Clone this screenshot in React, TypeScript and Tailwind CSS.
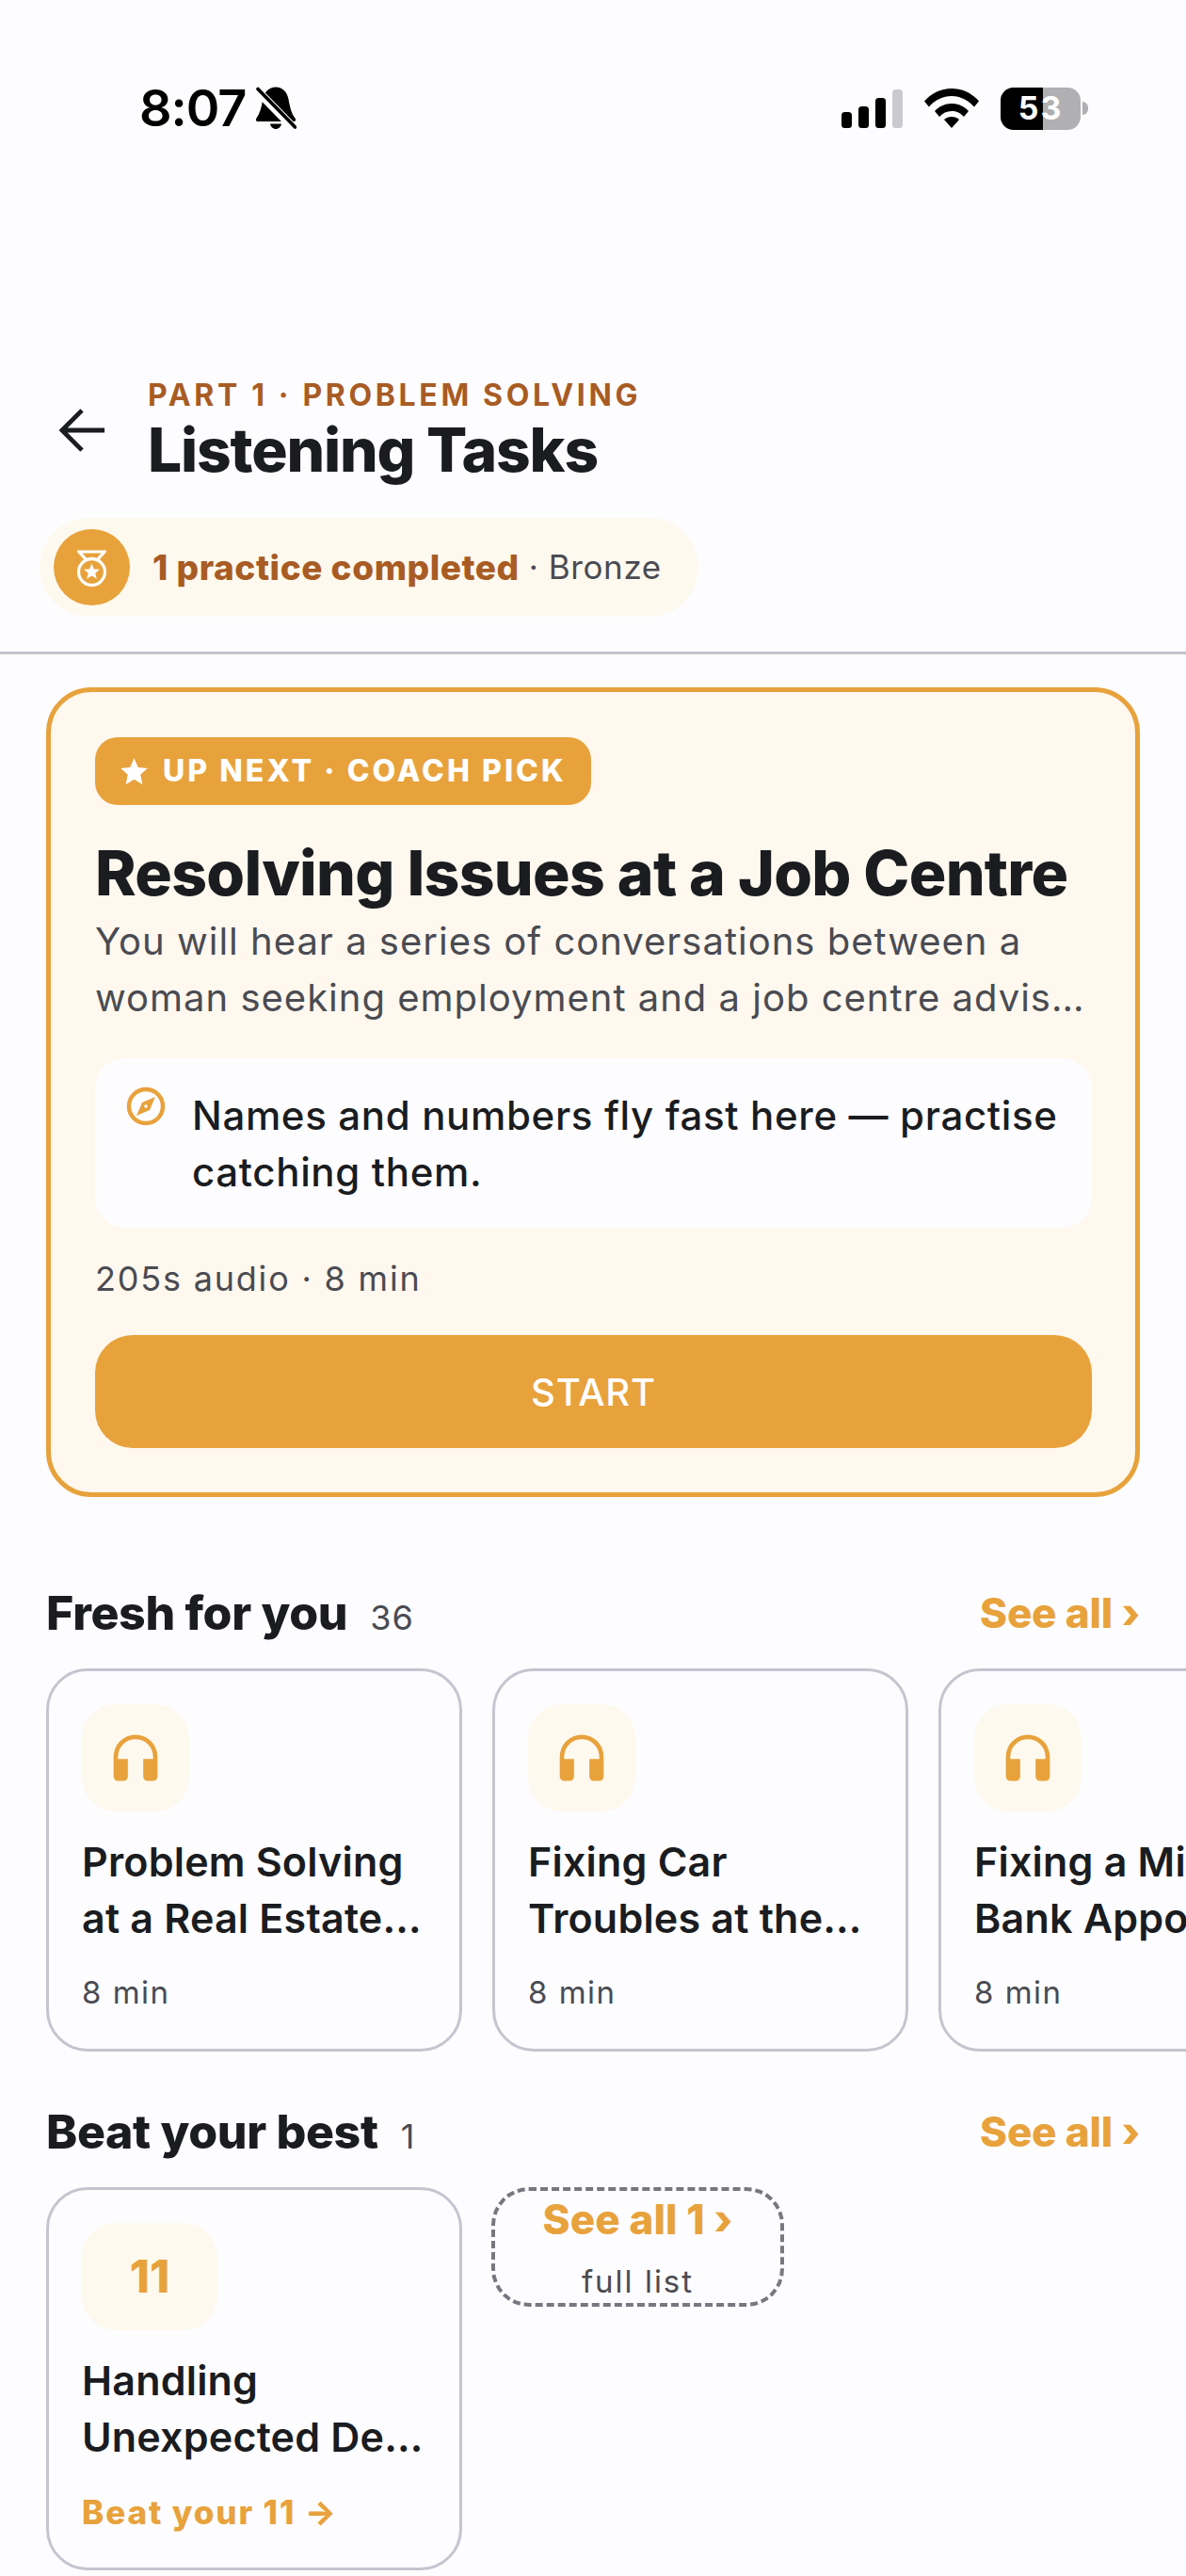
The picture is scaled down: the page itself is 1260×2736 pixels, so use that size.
import React from "react";

const amber = "#e8a23c";

function Bell() {
  return (
    <svg width="43" height="46" viewBox="0 0 43 46" className="ml-[11px]">
      <path d="M21 .5c7.500 0 12 5.500 13.500 13 1.500 8 3 15 7 20 1.200 1.500.7 3.500-1.500 3.500H2c-2 0-2.700-2-1.500-3.500 3.500-5 5.500-12 6.500-19C8 6 14 .5 21 .5z" fill="#000" />
      <path d="M15 39.500h12c-.5 3-3 5.500-6 5.500s-5.500-2.500-6-5.500z" fill="#000" />
      <path d="M1 4l40 41" stroke="#fdfcff" strokeWidth="9" />
      <path d="M2 2.500l39.500 40.500" stroke="#000" strokeWidth="3.600" strokeLinecap="round" />
    </svg>
  );
}

function Signal() {
  return (
    <svg width="65" height="41" viewBox="0 0 65 41">
      <rect x="0" y="24" width="11" height="17" rx="3.500" fill="#000" />
      <rect x="18" y="18" width="11" height="23" rx="3.500" fill="#000" />
      <rect x="36" y="9" width="11" height="32" rx="3.500" fill="#000" />
      <rect x="54" y="0" width="11" height="41" rx="3.500" fill="#c9c9cf" />
    </svg>
  );
}

function Wifi() {
  return (
    <svg width="58" height="42" viewBox="0 0 58 42">
      <path d="M0 13.500C7.500 5 18 0 29 0s21.500 5 29 13.500l-5 6C46.500 12 38 8 29 8S11.500 12 5 19.500z" fill="#000" />
      <path d="M11 24c4.500-5 11-8 18-8s13.500 3 18 8l-5 6c-3.500-4-8-6-13-6s-9.500 2-13 6z" fill="#000" />
      <path d="M21 33c2-2 5-3 8-3s6 1 8 3l-8 9z" fill="#000" />
    </svg>
  );
}

function Battery() {
  return (
    <div className="flex items-center">
      <div className="relative w-[85px] h-[45px] rounded-[14px] overflow-hidden flex bg-[#b0b0b2]">
        <div className="w-[45px] h-full bg-black" />
        <div className="absolute inset-0 flex items-center justify-center text-white text-[34px] font-bold leading-none tracking-[2px]">
          53
        </div>
      </div>
      <div className="w-[6px] h-[14px] rounded-r-[7px] bg-[#b0b0b2] ml-[2px]" />
    </div>
  );
}

function Medal() {
  return (
    <svg width="31" height="40" viewBox="0 0 31 40" fill="none" className="mt-[2px]">
      <path d="M2 2h27l-8 9H10z" stroke="#fff" strokeWidth="3.200" strokeLinejoin="miter" />
      <circle cx="15.500" cy="23.500" r="14" stroke="#fff" strokeWidth="3.300" fill="#e8a23c" />
      <path d="M15.500 14.500l2.300 6 6.200.2-4.800 4 1.600 6.100-5.300-3.400-5.300 3.400 1.600-6.100-4.800-4 6.200-.2z" fill="#fff" />
    </svg>
  );
}

function Headphones() {
  return (
    <svg width="56" height="56" viewBox="0 0 24 24" fill={amber}>
      <path d="M12 1.500a10 10 0 0 0-10 10v9a2 2 0 0 0 2 2h2.500a2 2 0 0 0 2-2v-8H4v-1a8 8 0 0 1 16 0v1h-4.500v8a2 2 0 0 0 2 2H20a2 2 0 0 0 2-2v-9a10 10 0 0 0-10-10z" />
    </svg>
  );
}

function Compass() {
  return (
    <svg width="42" height="42" viewBox="0 0 42 42" fill="none">
      <circle cx="21" cy="21" r="18" stroke={amber} strokeWidth="4.500" />
      <path d="M31 11l-6 14-14 6 6-14z" fill={amber} />
      <circle cx="21" cy="21" r="1.800" fill="#fdfcff" />
    </svg>
  );
}

function SectionHead({ title, count }: { title: string; count: string }) {
  return (
    <div className="flex items-center justify-between h-[60px]">
      <div className="flex items-baseline">
        <span className="text-[50px] font-extrabold text-[#1a1c1f] tracking-[-0.350px]">{title}</span>
        <span className="text-[36px] text-[#4a4b52] ml-[24px] tracking-[1px]">{count}</span>
      </div>
      <span className="text-[44px] font-extrabold text-[#e8a23c] tracking-[-0.200px]">See all ›</span>
    </div>
  );
}

function TaskCard({ lines, foot, badge, accent }: { lines: string[]; foot: string; badge?: string; accent?: boolean }) {
  return (
    <div className="shrink-0 w-[442px] h-[407px] rounded-[44px] border-[3px] border-[#c4c5cf] pl-[35px] pr-[35px] pt-[35px]">
      <div className={`${badge ? "w-[144px]" : "w-[114px]"} h-[114px] rounded-[36px] bg-[#fef9ee] flex items-center justify-center`}>
        {badge ? <span className="text-[48px] font-extrabold text-[#e8a23c]">{badge}</span> : <Headphones />}
      </div>
      <div className="mt-[23px] text-[43px] font-semibold leading-[60px] tracking-[0.200px] text-[#1a1c1f]">
        <div className="truncate">{lines[0]}</div>
        <div className="truncate">{lines[1]}</div>
      </div>
      <div className={`leading-[44px] ${accent ? "mt-[28px] text-[35px] font-extrabold text-[#e8a23c] tracking-[1.900px]" : "mt-[27px] text-[33px] text-[#4a4b52] tracking-[1.500px]"}`}>
        {foot}
      </div>
    </div>
  );
}

export default function App() {
  return (
    <div className="w-[1260px] h-[2736px] overflow-hidden bg-[#fdfcff] font-['Inter',sans-serif]">
      <div className="h-[400px] pt-[92px] pl-[148px] pr-[104px]">
        <div className="flex items-center justify-between h-[46px]">
          <div className="flex items-center">
            <span className="text-[54px] font-semibold text-black leading-none tracking-[-1px]">8:07</span>
            <Bell />
          </div>
          <div className="flex items-center gap-[23px]">
            <Signal />
            <Wifi />
            <Battery />
          </div>
        </div>
      </div>

      <div className="flex items-center pl-[63px]">
        <svg width="50" height="48" viewBox="0 0 52 48" fill="none" className="mr-[44px] -mt-[2px]">
          <path d="M50 24H4M25 2L3 24l22 22" stroke="#1a1c1f" strokeWidth="5" />
        </svg>
        <div>
          <div className="text-[32px] leading-[40px] font-bold tracking-[3.650px] text-[#a85c24]">PART 1 · PROBLEM SOLVING</div>
          <div className="text-[64px] leading-[76px] font-extrabold tracking-[-1.150px] text-[#1a1c1f]">Listening Tasks</div>
        </div>
      </div>

      <div className="ml-[42px] mt-[34px] w-[700px] h-[105px] rounded-full bg-[#fef9ee] flex items-center pl-[15px]">
        <div className="w-[81px] h-[81px] rounded-full bg-[#e8a23c] flex items-center justify-center">
          <Medal />
        </div>
        <span className="ml-[24px] text-[37px] font-extrabold text-[#a85c24] tracking-[0.550px]">1 practice completed</span>
        <span className="ml-[10px] text-[35px] text-[#4a4b52] tracking-[0.600px]">· Bronze</span>
      </div>

      <div className="mt-[37px] h-[3px] bg-[#c4c5cf]" />

      <div className="mx-[49px] mt-[35px] h-[860px] rounded-[48px] border-[5px] border-[#e8a23c] bg-[#fef8ee] pl-[47px] pr-[46px] pt-[48px]">
        <div className="inline-flex items-center h-[72px] rounded-[24px] bg-[#e8a23c] pl-[26px] pr-[26px]">
          <svg width="31" height="31" viewBox="0 0 24 24" fill="#fff">
            <path d="M12 1l3.300 7.500 7.700.8-5.800 5.300 1.700 8L12 18.400 5.100 22.600l1.700-8L1 9.300l7.700-.8z" />
          </svg>
          <span className="ml-[15px] text-[32px] font-extrabold text-white tracking-[3.050px]">UP NEXT · COACH PICK</span>
        </div>
        <div className="mt-[34px] text-[66px] leading-[76px] font-extrabold tracking-[-0.720px] text-[#1a1c1f] whitespace-nowrap">
          Resolving Issues at a Job Centre
        </div>
        <div className="mt-[5px] text-[40px] leading-[60px] text-[#4a4b52] tracking-[1px]">
          <div>You will hear a series of conversations between a</div>
          <div className="truncate">woman seeking employment and a job centre adviser about her options.</div>
        </div>
        <div className="mt-[34px] h-[180px] rounded-[32px] bg-[#fdfcff] flex pl-[33px] pr-[30px] pt-[31px]">
          <div className="shrink-0 w-[70px] -mt-[1px]">
            <Compass />
          </div>
          <div className="text-[42px] leading-[60px] font-medium text-[#1a1c1f] tracking-[0.650px]">
            Names and numbers fly fast here — practise catching them.
          </div>
        </div>
        <div className="mt-[32px] h-[44px] leading-[44px] text-[36px] text-[#4a4b52] tracking-[1.800px]">205s audio · 8 min</div>
        <div className="mt-[38px] h-[120px] rounded-[40px] bg-[#e8a23c] flex items-center justify-center text-[40px] pt-[2px] font-medium text-white tracking-[0.800px]">
          START
        </div>
      </div>

      <div className="mt-[93px] px-[49px]">
        <SectionHead title="Fresh for you" count="36" />
      </div>
      <div className="mt-[29px] pl-[49px] flex gap-[32px] overflow-hidden">
        <TaskCard lines={["Problem Solving", "at a Real Estate Agency"]} foot="8 min" />
        <TaskCard lines={["Fixing Car", "Troubles at the…"]} foot="8 min" />
        <TaskCard lines={["Fixing a Missed", "Bank Appointment"]} foot="8 min" />
      </div>

      <div className="mt-[55px] px-[49px]">
        <SectionHead title="Beat your best" count="1" />
      </div>
      <div className="mt-[29px] pl-[49px] flex items-start gap-[31px]">
        <TaskCard lines={["Handling", "Unexpected Delays at Work"]} foot="Beat your 11 →" badge="11" accent />
        <div className="w-[311px] h-[127px] rounded-[40px] border-[4px] border-dashed border-[#77787f] flex flex-col items-center">
          <span className="text-[44px] leading-[60px] font-extrabold text-[#e8a23c] tracking-[0.100px]">See all 1 ›</span>
          <span className="mt-[14px] text-[33px] leading-[44px] text-[#4a4b52] tracking-[2px]">full list</span>
        </div>
      </div>
    </div>
  );
}
